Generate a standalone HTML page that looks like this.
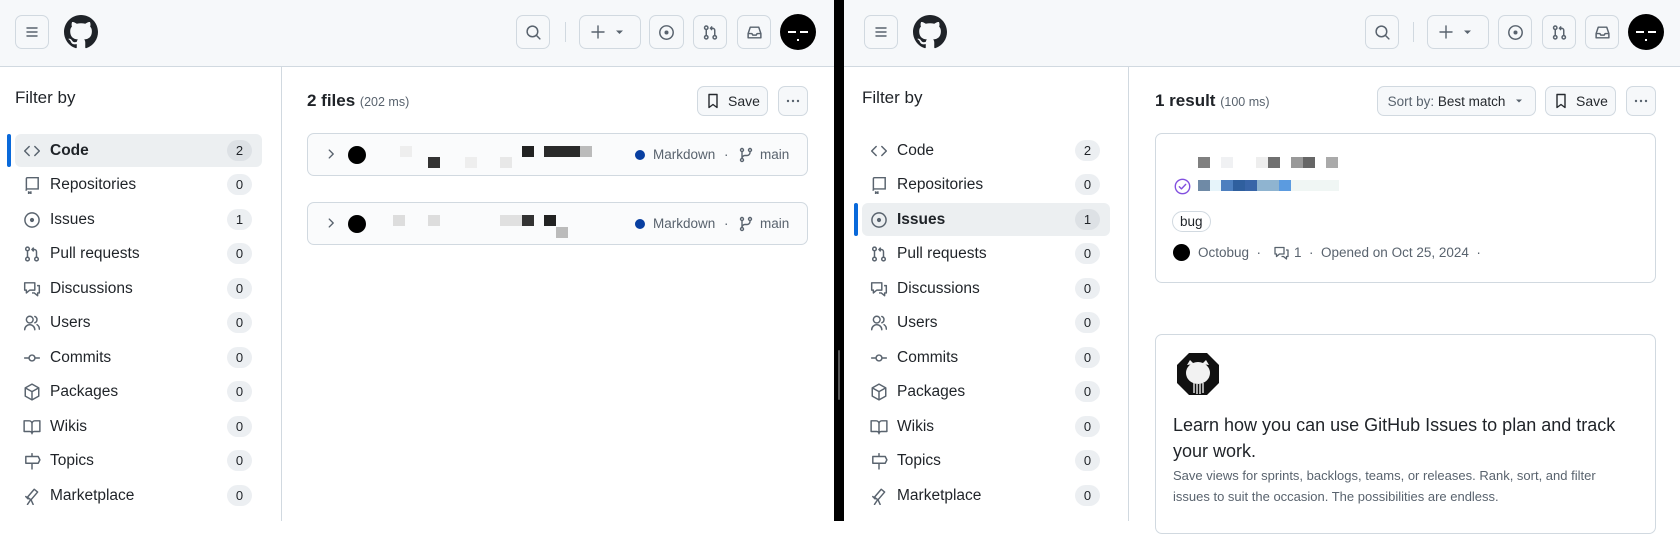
<!DOCTYPE html>
<html><head><meta charset="utf-8"><style>
*{box-sizing:border-box;margin:0;padding:0}
body{width:1680px;height:521px;overflow:hidden;background:#fff;font-family:"Liberation Sans",sans-serif;color:#1f2328;position:relative}
.a{position:absolute}
.hdr{position:absolute;top:0;height:67px;background:#f6f8fa;border-bottom:1px solid #d1d9e0}
.btn{position:absolute;border:1px solid #d1d9e0;border-radius:7px;background:#f6f8fa;display:flex;align-items:center;justify-content:center;color:#59636e}
.wbtn{position:absolute;border:1px solid #d1d9e0;border-radius:7px;background:#f6f8fa;display:flex;align-items:center;justify-content:center;font-size:14px;font-weight:400;color:#25292e}
.av{position:absolute;border-radius:50%;background:#000}
.side{position:absolute;top:67px;bottom:0;border-right:1px solid #d1d9e0}
.fb{position:absolute;font-size:17px;font-weight:400}
.it{position:absolute;height:33px;border-radius:6px;display:flex;align-items:center;font-size:15.5px}
.it svg{position:absolute;left:8px;width:18px;height:18px}
.it span.t{position:absolute;left:35px}
.cnt{position:absolute;width:25px;height:21px;border-radius:11px;background:#eceff2;font-size:13px;font-weight:400;display:flex;align-items:center;justify-content:center}
.sel{background:#eceff1;font-weight:600}
.ind{position:absolute;width:4px;height:33px;border-radius:3px;background:#0969da}
.box{position:absolute;border:1px solid #d1d9e0;border-radius:7px;background:#fff}
.px{position:absolute;width:12px;height:11px}
.g{color:#59636e}
</style></head><body>

<!-- LEFT PANE -->
<div class="hdr" style="left:0;width:834px"></div>
<div class="btn" style="left:15px;top:15px;width:34px;height:34px"><svg width="16" height="16" viewBox="0 0 16 16" fill="none" stroke="#59636e" stroke-width="1.4" stroke-linecap="round"><path d="M3 4h10M3 8h10M3 12h10"/></svg></div>
<svg class="a" style="left:64px;top:15px" width="34" height="34" viewBox="0 0 16 16"><path fill="#1f2328" d="M8 0c4.42 0 8 3.58 8 8a8.013 8.013 0 0 1-5.45 7.59c-.4.08-.55-.17-.55-.38 0-.27.01-1.13.01-2.2 0-.75-.25-1.23-.54-1.48 1.78-.2 3.65-.88 3.65-3.95 0-.88-.31-1.59-.82-2.150.08-.2.36-1.02-.08-2.12 0 0-.67-.22-2.2.82-.64-.18-1.32-.27-2-.27-.68 0-1.36.09-2 .27-1.53-1.03-2.2-.82-2.2-.82-.44 1.1-.16 1.92-.08 2.12-.51.56-.82 1.28-.82 2.15 0 3.06 1.86 3.75 3.64 3.95-.23.2-.44.55-.51 1.07-.46.21-1.61.55-2.33-.66-.15-.24-.6-.83-1.23-.82-.67.01-.27.38.01.53.34.19.73.9.82 1.13.16.45.68 1.31 2.69.94 0 .67.01 1.3.01 1.49 0 .21-.15.45-.55.38A7.995 7.995 0 0 1 0 8c0-4.42 3.58-8 8-8Z"/></svg>

<div class="btn" style="left:516px;top:15px;width:34px;height:34px"><svg width="17" height="17" viewBox="0 0 16 16" fill="none" stroke="#59636e" stroke-width="1.4" stroke-linecap="round"><circle cx="7" cy="7" r="5"/><path d="M10.6 10.6 14 14"/></svg></div>
<div class="a" style="left:565px;top:22px;width:1px;height:20px;background:#d1d9e0"></div>
<div class="btn" style="left:579px;top:15px;width:62px;height:34px"><svg width="40" height="16" viewBox="0 0 40 16" fill="none" stroke="#59636e" stroke-width="1.4" stroke-linecap="round"><path d="M8 2v12M2 8h12"/><path d="M26 6.5l3.5 3.5 3.5-3.5z" fill="#59636e" stroke="none"/></svg></div>
<div class="btn" style="left:649px;top:15px;width:35px;height:34px"><svg width="17" height="17" viewBox="0 0 16 16" fill="none" stroke="#59636e" stroke-width="1.4"><circle cx="8" cy="8" r="6.3"/><circle cx="8" cy="8" r="1.2" fill="#59636e"/></svg></div>
<div class="btn" style="left:693px;top:15px;width:34px;height:34px"><svg width="17" height="17" viewBox="0 0 16 16" fill="none" stroke="#59636e" stroke-width="1.4"><circle cx="4" cy="3.5" r="1.6"/><circle cx="4" cy="12.5" r="1.6"/><circle cx="12" cy="12.5" r="1.6"/><path d="M4 5v6M12 11V6a2 2 0 0 0-2-2H8M9.5 2.3 8 4l1.5 1.7"/></svg></div>
<div class="btn" style="left:737px;top:15px;width:34px;height:34px"><svg width="17" height="17" viewBox="0 0 16 16" fill="none" stroke="#59636e" stroke-width="1.4" stroke-linejoin="round"><path d="M2 9l2-6h8l2 6v4H2z"/><path d="M2 9h3.5l1 1.5h3l1-1.5H14"/></svg></div>
<div class="av" style="left:780px;top:14px;width:36px;height:36px"><div class="a" style="left:8px;top:17px;width:8px;height:1.5px;background:#fff"></div><div class="a" style="left:20px;top:17px;width:8px;height:1.5px;background:#fff"></div><div class="a" style="left:17px;top:25px;width:2px;height:2px;background:#fff"></div></div>

<div class="side" style="left:0;width:282px"></div>
<div class="fb" style="left:15px;top:88px">Filter by</div>

<div class="ind" style="left:7px;top:134px"></div>
<div class="it sel" style="left:15px;top:134px;width:247px"><svg width="16" height="16" viewBox="0 0 16 16" fill="none" stroke="#59636e" stroke-width="1.3" stroke-linecap="round" stroke-linejoin="round"><path d="M5.5 4 1.5 8l4 4M10.5 4l4 4-4 4"/></svg><span class="t">Code</span></div>
<div class="cnt" style="left:227px;top:140px;background:#dde1e5">2</div>

<div class="it" style="left:15px;top:168px;width:247px"><svg width="16" height="16" viewBox="0 0 16 16" fill="none" stroke="#59636e" stroke-width="1.3"><path d="M3 13V2.5A1 1 0 0 1 4 1.5h9.5v10H4a1 1 0 0 0-1 1.5M5 13.5v2l1-.8 1 .8v-2"/></svg><span class="t">Repositories</span></div>
<div class="cnt" style="left:227px;top:174px">0</div>
<div class="it" style="left:15px;top:203px;width:247px"><svg width="16" height="16" viewBox="0 0 16 16" fill="none" stroke="#59636e" stroke-width="1.3"><circle cx="8" cy="8" r="6.3"/><circle cx="8" cy="8" r="1.2" fill="#59636e"/></svg><span class="t">Issues</span></div>
<div class="cnt" style="left:227px;top:209px">1</div>
<div class="it" style="left:15px;top:237px;width:247px"><svg width="16" height="16" viewBox="0 0 16 16" fill="none" stroke="#59636e" stroke-width="1.3"><circle cx="4" cy="3.5" r="1.6"/><circle cx="4" cy="12.5" r="1.6"/><circle cx="12" cy="12.5" r="1.6"/><path d="M4 5v6M12 11V6a2 2 0 0 0-2-2H8M9.5 2.3 8 4l1.5 1.7"/></svg><span class="t">Pull requests</span></div>
<div class="cnt" style="left:227px;top:243px">0</div>
<div class="it" style="left:15px;top:272px;width:247px"><svg width="16" height="16" viewBox="0 0 16 16" fill="none" stroke="#59636e" stroke-width="1.3" stroke-linejoin="round"><path d="M1.5 2.5h9v6.5H6l-3 2.5V9H1.5z"/><path d="M12.5 5h2v6.5H13V14l-3-2.5H8"/></svg><span class="t">Discussions</span></div>
<div class="cnt" style="left:227px;top:278px">0</div>
<div class="it" style="left:15px;top:306px;width:247px"><svg width="16" height="16" viewBox="0 0 16 16" fill="none" stroke="#59636e" stroke-width="1.3" stroke-linecap="round"><circle cx="6" cy="5" r="3"/><path d="M1.5 14a4.5 4.5 0 0 1 9 0M10.5 2.2a3 3 0 0 1 0 5.6M12.5 9.5a4.5 4.5 0 0 1 2 4"/></svg><span class="t">Users</span></div>
<div class="cnt" style="left:227px;top:312px">0</div>
<div class="it" style="left:15px;top:341px;width:247px"><svg width="16" height="16" viewBox="0 0 16 16" fill="none" stroke="#59636e" stroke-width="1.3"><circle cx="8" cy="8" r="2.6"/><path d="M1 8h4.4M10.6 8H15"/></svg><span class="t">Commits</span></div>
<div class="cnt" style="left:227px;top:347px">0</div>
<div class="it" style="left:15px;top:375px;width:247px"><svg width="16" height="16" viewBox="0 0 16 16" fill="none" stroke="#59636e" stroke-width="1.3" stroke-linejoin="round"><path d="M8 1 14 4.3v7.4L8 15 2 11.7V4.3z"/><path d="M2 4.3 8 7.7l6-3.4M8 7.7V15"/></svg><span class="t">Packages</span></div>
<div class="cnt" style="left:227px;top:381px">0</div>
<div class="it" style="left:15px;top:410px;width:247px"><svg width="16" height="16" viewBox="0 0 16 16" fill="none" stroke="#59636e" stroke-width="1.3" stroke-linejoin="round"><path d="M1 2.5h4.5A2.5 2.5 0 0 1 8 5v9a2 2 0 0 0-2-2H1zM15 2.5h-4.5A2.5 2.5 0 0 0 8 5v9a2 2 0 0 1 2-2h5z"/></svg><span class="t">Wikis</span></div>
<div class="cnt" style="left:227px;top:416px">0</div>
<div class="it" style="left:15px;top:444px;width:247px"><svg width="16" height="16" viewBox="0 0 16 16" fill="none" stroke="#59636e" stroke-width="1.3" stroke-linejoin="round"><path d="M8 1v3M8 10v5.5M2.5 4h11L15 7l-1.5 3h-11z"/></svg><span class="t">Topics</span></div>
<div class="cnt" style="left:227px;top:450px">0</div>
<div class="it" style="left:15px;top:479px;width:247px"><svg width="16" height="16" viewBox="0 0 16 16" fill="none" stroke="#59636e" stroke-width="1.3" stroke-linejoin="round" stroke-linecap="round"><path d="M4 9l6-7 3 2.5-6 7zM7 11l-3 4.5M7 11l2 4.5M2.5 8.5l2 2"/></svg><span class="t">Marketplace</span></div>
<div class="cnt" style="left:227px;top:485px">0</div>

<div class="a" style="left:307px;top:91px;font-size:17px;font-weight:600">2 files <span class="g" style="font-size:12.5px;font-weight:400">(202 ms)</span></div>
<div class="wbtn" style="left:697px;top:86px;width:71px;height:30px"><svg width="16" height="16" viewBox="0 0 16 16" fill="none" stroke="#25292e" stroke-width="1.4" stroke-linejoin="round" style="margin-right:7px"><path d="M4 1.5h8v13l-4-3-4 3z"/></svg>Save</div>
<div class="wbtn" style="left:778px;top:86px;width:30px;height:30px"><svg width="16" height="16" viewBox="0 0 16 16" fill="#59636e"><circle cx="3" cy="8" r="1.2"/><circle cx="8" cy="8" r="1.2"/><circle cx="13" cy="8" r="1.2"/></svg></div>

<div class="box" style="left:307px;top:133px;width:501px;height:43px;background:#fafbfc"></div>
<div class="box" style="left:307px;top:202px;width:501px;height:43px;background:#fafbfc"></div>
<svg class="a" style="left:324px;top:147px" width="14" height="14" viewBox="0 0 16 16" fill="none" stroke="#59636e" stroke-width="1.6" stroke-linecap="round" stroke-linejoin="round"><path d="M6 3.5 10.5 8 6 12.5"/></svg>
<svg class="a" style="left:324px;top:216px" width="14" height="14" viewBox="0 0 16 16" fill="none" stroke="#59636e" stroke-width="1.6" stroke-linecap="round" stroke-linejoin="round"><path d="M6 3.5 10.5 8 6 12.5"/></svg>
<div class="av" style="left:348px;top:146px;width:18px;height:18px"></div>
<div class="av" style="left:348px;top:215px;width:18px;height:18px"></div>
<div class="px" style="left:428px;top:157px;background:#333"></div>
<div class="px" style="left:522px;top:146px;background:#222"></div>
<div class="px" style="left:544px;top:146px;width:36px;background:#2a2a2a"></div>
<div class="px" style="left:580px;top:146px;background:#bbb"></div>
<div class="px" style="left:500px;top:157px;background:#e8e8e8"></div>
<div class="px" style="left:400px;top:146px;background:#eee"></div>
<div class="px" style="left:465px;top:157px;background:#eee"></div>
<div class="px" style="left:522px;top:215px;background:#333"></div>
<div class="px" style="left:544px;top:215px;background:#222"></div>
<div class="px" style="left:556px;top:227px;background:#bbb"></div>
<div class="px" style="left:393px;top:215px;background:#ddd"></div>
<div class="px" style="left:428px;top:215px;background:#ddd"></div>
<div class="px" style="left:500px;top:215px;background:#e0e0e0;width:22px"></div>
<div class="a" style="left:635px;top:150px;width:10px;height:10px;border-radius:50%;background:#083fa1"></div>
<div class="a g" style="left:653px;top:147px;font-size:13.5px">Markdown</div>
<div class="a g" style="left:724px;top:147px;font-size:13.5px">·</div>
<svg class="a" style="left:738px;top:147px" width="16" height="16" viewBox="0 0 16 16" fill="none" stroke="#59636e" stroke-width="1.4"><circle cx="4" cy="3" r="1.5"/><circle cx="4" cy="13" r="1.5"/><circle cx="12" cy="3" r="1.5"/><path d="M4 4.5v7M12 4.5v1a3 3 0 0 1-3 3H7a3 3 0 0 0-3 3"/></svg>
<div class="a g" style="left:760px;top:147px;font-size:13.5px">main</div>
<div class="a" style="left:635px;top:219px;width:10px;height:10px;border-radius:50%;background:#083fa1"></div>
<div class="a g" style="left:653px;top:216px;font-size:13.5px">Markdown</div>
<div class="a g" style="left:724px;top:216px;font-size:13.5px">·</div>
<svg class="a" style="left:738px;top:216px" width="16" height="16" viewBox="0 0 16 16" fill="none" stroke="#59636e" stroke-width="1.4"><circle cx="4" cy="3" r="1.5"/><circle cx="4" cy="13" r="1.5"/><circle cx="12" cy="3" r="1.5"/><path d="M4 4.5v7M12 4.5v1a3 3 0 0 1-3 3H7a3 3 0 0 0-3 3"/></svg>
<div class="a g" style="left:760px;top:216px;font-size:13.5px">main</div>

<!-- DIVIDER -->
<div class="a" style="left:834px;top:0;width:10px;height:521px;background:#000"></div>
<div class="a" style="left:838px;top:350px;width:2px;height:50px;background:#555;border-radius:1px"></div>

<!-- RIGHT PANE -->
<div class="hdr" style="left:844px;width:836px"></div>
<div class="btn" style="left:864px;top:15px;width:34px;height:34px"><svg width="16" height="16" viewBox="0 0 16 16" fill="none" stroke="#59636e" stroke-width="1.4" stroke-linecap="round"><path d="M3 4h10M3 8h10M3 12h10"/></svg></div>
<svg class="a" style="left:913px;top:15px" width="34" height="34" viewBox="0 0 16 16"><path fill="#1f2328" d="M8 0c4.42 0 8 3.58 8 8a8.013 8.013 0 0 1-5.45 7.59c-.4.08-.55-.17-.55-.38 0-.27.01-1.13.01-2.2 0-.75-.25-1.23-.54-1.48 1.78-.2 3.65-.88 3.65-3.95 0-.88-.31-1.59-.82-2.15.08-.2.36-1.02-.08-2.12 0 0-.67-.22-2.2.82-.64-.18-1.32-.27-2-.27-.68 0-1.36.09-2 .27-1.53-1.03-2.2-.82-2.2-.82-.44 1.1-.16 1.92-.08 2.12-.51.56-.82 1.28-.82 2.15 0 3.06 1.86 3.75 3.64 3.95-.23.2-.44.55-.51 1.07-.46.21-1.61.55-2.33-.66-.15-.24-.6-.83-1.23-.82-.67.01-.27.38.01.53.34.19.73.9.82 1.13.16.45.68 1.31 2.69.94 0 .67.01 1.3.01 1.49 0 .21-.15.45-.55.38A7.995 7.995 0 0 1 0 8c0-4.42 3.58-8 8-8Z"/></svg>
<div class="btn" style="left:1365px;top:15px;width:34px;height:34px"><svg width="17" height="17" viewBox="0 0 16 16" fill="none" stroke="#59636e" stroke-width="1.4" stroke-linecap="round"><circle cx="7" cy="7" r="5"/><path d="M10.6 10.6 14 14"/></svg></div>
<div class="a" style="left:1413px;top:22px;width:1px;height:20px;background:#d1d9e0"></div>
<div class="btn" style="left:1427px;top:15px;width:62px;height:34px"><svg width="40" height="16" viewBox="0 0 40 16" fill="none" stroke="#59636e" stroke-width="1.4" stroke-linecap="round"><path d="M8 2v12M2 8h12"/><path d="M26 6.5l3.5 3.5 3.5-3.5z" fill="#59636e" stroke="none"/></svg></div>
<div class="btn" style="left:1498px;top:15px;width:34px;height:34px"><svg width="17" height="17" viewBox="0 0 16 16" fill="none" stroke="#59636e" stroke-width="1.4"><circle cx="8" cy="8" r="6.3"/><circle cx="8" cy="8" r="1.2" fill="#59636e"/></svg></div>
<div class="btn" style="left:1542px;top:15px;width:34px;height:34px"><svg width="17" height="17" viewBox="0 0 16 16" fill="none" stroke="#59636e" stroke-width="1.4"><circle cx="4" cy="3.5" r="1.6"/><circle cx="4" cy="12.5" r="1.6"/><circle cx="12" cy="12.5" r="1.6"/><path d="M4 5v6M12 11V6a2 2 0 0 0-2-2H8M9.5 2.3 8 4l1.5 1.7"/></svg></div>
<div class="btn" style="left:1585px;top:15px;width:34px;height:34px"><svg width="17" height="17" viewBox="0 0 16 16" fill="none" stroke="#59636e" stroke-width="1.4" stroke-linejoin="round"><path d="M2 9l2-6h8l2 6v4H2z"/><path d="M2 9h3.5l1 1.5h3l1-1.5H14"/></svg></div>
<div class="av" style="left:1628px;top:14px;width:36px;height:36px"><div class="a" style="left:8px;top:17px;width:8px;height:1.5px;background:#fff"></div><div class="a" style="left:20px;top:17px;width:8px;height:1.5px;background:#fff"></div><div class="a" style="left:17px;top:25px;width:2px;height:2px;background:#fff"></div></div>

<div class="side" style="left:844px;width:285px"></div>
<div class="fb" style="left:862px;top:88px">Filter by</div>

<div class="it" style="left:862px;top:134px;width:248px"><svg width="16" height="16" viewBox="0 0 16 16" fill="none" stroke="#59636e" stroke-width="1.3" stroke-linecap="round" stroke-linejoin="round"><path d="M5.5 4 1.5 8l4 4M10.5 4l4 4-4 4"/></svg><span class="t">Code</span></div>
<div class="cnt" style="left:1075px;top:140px">2</div>
<div class="it" style="left:862px;top:168px;width:248px"><svg width="16" height="16" viewBox="0 0 16 16" fill="none" stroke="#59636e" stroke-width="1.3"><path d="M3 13V2.5A1 1 0 0 1 4 1.5h9.5v10H4a1 1 0 0 0-1 1.5M5 13.5v2l1-.8 1 .8v-2"/></svg><span class="t">Repositories</span></div>
<div class="cnt" style="left:1075px;top:174px">0</div>
<div class="ind" style="left:854px;top:203px"></div>
<div class="it sel" style="left:862px;top:203px;width:248px"><svg width="16" height="16" viewBox="0 0 16 16" fill="none" stroke="#59636e" stroke-width="1.3"><circle cx="8" cy="8" r="6.3"/><circle cx="8" cy="8" r="1.2" fill="#59636e"/></svg><span class="t">Issues</span></div>
<div class="cnt" style="left:1075px;top:209px;background:#dde1e5">1</div>
<div class="it" style="left:862px;top:237px;width:248px"><svg width="16" height="16" viewBox="0 0 16 16" fill="none" stroke="#59636e" stroke-width="1.3"><circle cx="4" cy="3.5" r="1.6"/><circle cx="4" cy="12.5" r="1.6"/><circle cx="12" cy="12.5" r="1.6"/><path d="M4 5v6M12 11V6a2 2 0 0 0-2-2H8M9.5 2.3 8 4l1.5 1.7"/></svg><span class="t">Pull requests</span></div>
<div class="cnt" style="left:1075px;top:243px">0</div>
<div class="it" style="left:862px;top:272px;width:248px"><svg width="16" height="16" viewBox="0 0 16 16" fill="none" stroke="#59636e" stroke-width="1.3" stroke-linejoin="round"><path d="M1.5 2.5h9v6.5H6l-3 2.5V9H1.5z"/><path d="M12.5 5h2v6.5H13V14l-3-2.5H8"/></svg><span class="t">Discussions</span></div>
<div class="cnt" style="left:1075px;top:278px">0</div>
<div class="it" style="left:862px;top:306px;width:248px"><svg width="16" height="16" viewBox="0 0 16 16" fill="none" stroke="#59636e" stroke-width="1.3" stroke-linecap="round"><circle cx="6" cy="5" r="3"/><path d="M1.5 14a4.5 4.5 0 0 1 9 0M10.5 2.2a3 3 0 0 1 0 5.6M12.5 9.5a4.5 4.5 0 0 1 2 4"/></svg><span class="t">Users</span></div>
<div class="cnt" style="left:1075px;top:312px">0</div>
<div class="it" style="left:862px;top:341px;width:248px"><svg width="16" height="16" viewBox="0 0 16 16" fill="none" stroke="#59636e" stroke-width="1.3"><circle cx="8" cy="8" r="2.6"/><path d="M1 8h4.4M10.6 8H15"/></svg><span class="t">Commits</span></div>
<div class="cnt" style="left:1075px;top:347px">0</div>
<div class="it" style="left:862px;top:375px;width:248px"><svg width="16" height="16" viewBox="0 0 16 16" fill="none" stroke="#59636e" stroke-width="1.3" stroke-linejoin="round"><path d="M8 1 14 4.3v7.4L8 15 2 11.7V4.3z"/><path d="M2 4.3 8 7.7l6-3.4M8 7.7V15"/></svg><span class="t">Packages</span></div>
<div class="cnt" style="left:1075px;top:381px">0</div>
<div class="it" style="left:862px;top:410px;width:248px"><svg width="16" height="16" viewBox="0 0 16 16" fill="none" stroke="#59636e" stroke-width="1.3" stroke-linejoin="round"><path d="M1 2.5h4.5A2.5 2.5 0 0 1 8 5v9a2 2 0 0 0-2-2H1zM15 2.5h-4.5A2.5 2.5 0 0 0 8 5v9a2 2 0 0 1 2-2h5z"/></svg><span class="t">Wikis</span></div>
<div class="cnt" style="left:1075px;top:416px">0</div>
<div class="it" style="left:862px;top:444px;width:248px"><svg width="16" height="16" viewBox="0 0 16 16" fill="none" stroke="#59636e" stroke-width="1.3" stroke-linejoin="round"><path d="M8 1v3M8 10v5.5M2.5 4h11L15 7l-1.5 3h-11z"/></svg><span class="t">Topics</span></div>
<div class="cnt" style="left:1075px;top:450px">0</div>
<div class="it" style="left:862px;top:479px;width:248px"><svg width="16" height="16" viewBox="0 0 16 16" fill="none" stroke="#59636e" stroke-width="1.3" stroke-linejoin="round" stroke-linecap="round"><path d="M4 9l6-7 3 2.5-6 7zM7 11l-3 4.5M7 11l2 4.5M2.5 8.5l2 2"/></svg><span class="t">Marketplace</span></div>
<div class="cnt" style="left:1075px;top:485px">0</div>

<div class="a" style="left:1155px;top:91px;font-size:17px;font-weight:600">1 result <span class="g" style="font-size:12.5px;font-weight:400">(100 ms)</span></div>
<div class="wbtn" style="left:1377px;top:86px;width:159px;height:30px;color:#59636e;font-size:13.5px">Sort by:&nbsp;<span style="color:#25292e">Best match</span><svg width="12" height="12" viewBox="0 0 16 16" style="margin-left:8px"><path d="M4 6l4 4 4-4z" fill="#59636e"/></svg></div>
<div class="wbtn" style="left:1545px;top:86px;width:71px;height:30px"><svg width="16" height="16" viewBox="0 0 16 16" fill="none" stroke="#25292e" stroke-width="1.4" stroke-linejoin="round" style="margin-right:7px"><path d="M4 1.5h8v13l-4-3-4 3z"/></svg>Save</div>
<div class="wbtn" style="left:1626px;top:86px;width:30px;height:30px"><svg width="16" height="16" viewBox="0 0 16 16" fill="#59636e"><circle cx="3" cy="8" r="1.2"/><circle cx="8" cy="8" r="1.2"/><circle cx="13" cy="8" r="1.2"/></svg></div>

<div class="box" style="left:1155px;top:133px;width:501px;height:150px"></div>
<div class="px" style="left:1198px;top:157px;background:#808080"></div>
<div class="px" style="left:1221px;top:157px;background:#f0f1f3"></div>
<div class="px" style="left:1256px;top:157px;background:#eee"></div>
<div class="px" style="left:1268px;top:157px;background:#707070"></div>
<div class="px" style="left:1291px;top:157px;background:#999"></div>
<div class="px" style="left:1303px;top:157px;background:#666"></div>
<div class="px" style="left:1326px;top:157px;background:#aaa"></div>
<svg class="a" style="left:1174px;top:178px" width="17" height="17" viewBox="0 0 16 16" fill="none" stroke="#8250df" stroke-width="1.3" stroke-linecap="round" stroke-linejoin="round"><circle cx="8" cy="8" r="6.8"/><path d="M5 8.2 7 10.2 11 6"/></svg>
<div class="px" style="left:1198px;top:180px;background:#6f8aa6"></div>
<div class="px" style="left:1210px;top:180px;background:#e6f4fa"></div>
<div class="px" style="left:1221px;top:180px;background:#4d7fbf;width:12px"></div>
<div class="px" style="left:1233px;top:180px;background:#2f5f9e"></div>
<div class="px" style="left:1245px;top:180px;background:#3865a8"></div>
<div class="px" style="left:1257px;top:180px;background:#8fb4d0;width:22px"></div>
<div class="px" style="left:1279px;top:180px;background:#5b9be0"></div>
<div class="px" style="left:1291px;top:180px;background:#f0f6f4;width:48px"></div>
<div class="a" style="left:1172px;top:211px;height:21px;padding:0 7px;border:1px solid #d1d9e0;border-radius:11px;font-size:13.5px;font-weight:400;line-height:19px">bug</div>
<div class="av" style="left:1173px;top:244px;width:17px;height:17px"></div>
<div class="a g" style="left:1198px;top:245px;font-size:13.5px">Octobug&nbsp;&nbsp;·</div>
<svg class="a" style="left:1273px;top:245px" width="17" height="16" viewBox="0 0 16 16" fill="none" stroke="#59636e" stroke-width="1.3" stroke-linejoin="round"><path d="M1.5 2.5h9v6.5H6l-3 2.5V9H1.5z"/><path d="M12.5 5h2v6.5H13V14l-3-2.5H8"/></svg>
<div class="a g" style="left:1294px;top:245px;font-size:13.5px">1&nbsp;&nbsp;·&nbsp;&nbsp;Opened on Oct 25, 2024&nbsp;&nbsp;·</div>

<div class="box" style="left:1155px;top:334px;width:501px;height:200px"></div>
<svg class="a" style="left:1175px;top:351px" width="46" height="46" viewBox="0 0 46 46"><path d="M14 2h18l12 12v18L32 44H14L2 32V14z" fill="#111"/><ellipse cx="23" cy="22" rx="12" ry="11" fill="#f2f2f2"/><path d="M12 14l3-5 4 4M34 14l-3-5-4 4" fill="#f2f2f2"/><path d="M19 32v10M22 32v11M25 32v11M28 32v10" stroke="#ddd" stroke-width="1.5"/></svg>
<div class="a" style="left:1173px;top:412px;font-size:18px;line-height:26px;color:#1f2328">Learn how you can use GitHub Issues to plan and track<br>your work.</div>
<div class="a g" style="left:1173px;top:465px;font-size:13px;line-height:21px">Save views for sprints, backlogs, teams, or releases. Rank, sort, and filter<br>issues to suit the occasion. The possibilities are endless.</div>
</body></html>
